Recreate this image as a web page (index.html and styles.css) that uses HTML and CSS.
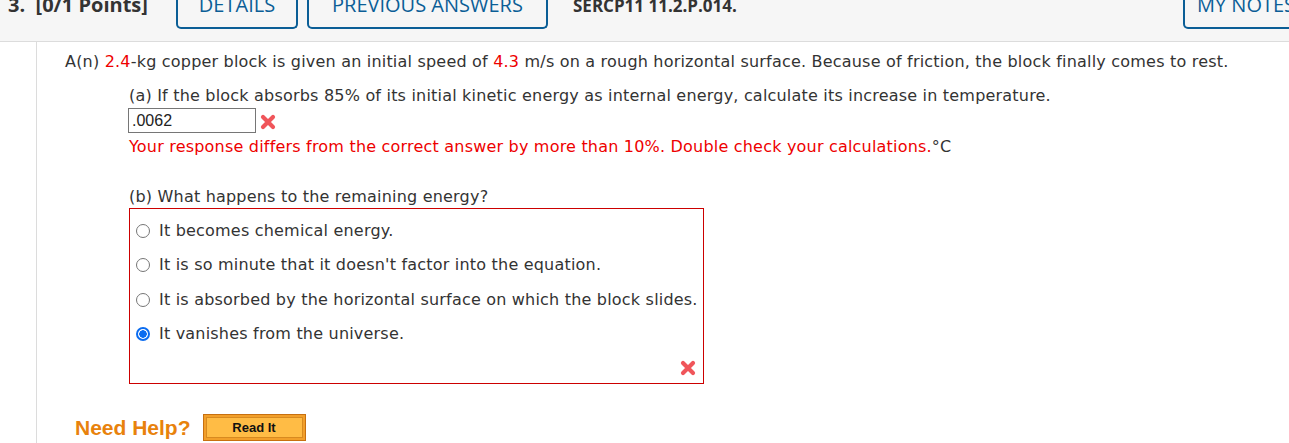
FILE: index.html
```html
<!DOCTYPE html>
<html>
<head>
<meta charset="utf-8">
<link rel="stylesheet" href="styles.css">
</head>
<body>
<div class="header">
  <div class="qnum">3.&nbsp;&nbsp;[0/1 Points]</div>
  <div class="hbtn details">DETAILS</div>
  <div class="hbtn prev">PREVIOUS ANSWERS</div>
  <div class="code">SERCP11 11.2.P.014.</div>
  <div class="spacer"></div>
  <div class="hbtn notes">MY NOTES</div>
</div>
<div class="body">
  <div class="content">
    <p class="stem">A(n) <span class="red">2.4</span>-kg copper block is given an initial speed of <span class="red">4.3</span> m/s on a rough horizontal surface. Because of friction, the block finally comes to rest.</p>
    <div class="part">
      <p class="q">(a) If the block absorbs 85% of its initial kinetic energy as internal energy, calculate its increase in temperature.</p>
      <div class="answer">
        <div class="input">.0062</div>
        <svg class="xmark" width="18" height="18" viewBox="0 0 18 18"><path d="M4 4 L14 14 M14 4 L4 14" stroke="#f0555a" stroke-width="4.2" stroke-linecap="round"/></svg>
      </div>
      <p class="err">Your response differs from the correct answer by more than 10%. Double check your calculations.<span class="unit">°C</span></p>
      <p class="q qb">(b) What happens to the remaining energy?</p>
      <div class="choices">
        <label class="choice"><span class="radio"></span>It becomes chemical energy.</label>
        <label class="choice"><span class="radio"></span>It is so minute that it doesn't factor into the equation.</label>
        <label class="choice"><span class="radio"></span>It is absorbed by the horizontal surface on which the block slides.</label>
        <label class="choice"><span class="radio on"></span>It vanishes from the universe.</label>
        <div class="boxmark"><svg class="xmark" width="18" height="18" viewBox="0 0 18 18"><path d="M4 4 L14 14 M14 4 L4 14" stroke="#f0555a" stroke-width="4.2" stroke-linecap="round"/></svg></div>
      </div>
    </div>
    <div class="help">
      <span class="needhelp">Need Help?</span>
      <span class="readit"><span class="readin">Read It</span></span>
    </div>
  </div>
</div>
</body>
</html>
```
FILE: styles.css
```css
html, body { margin: 0; padding: 0; background: #fff; overflow: hidden; }
body { width: 1289px; height: 443px; }
.header {
  display: flex;
  align-items: flex-start;
  height: 48px;
  margin-top: -6px;
  background: #f6f6f6;
  border-bottom: 1px solid #dcdcdc;
  font-family: "Open Sans", sans-serif;
  box-sizing: border-box;
}
.qnum {
  font-weight: 700;
  font-size: 20px;
  color: #333;
  margin-left: 8px;
  line-height: 24px;
  margin-top: -1px;
  width: 168px;
}
.hbtn {
  box-sizing: border-box;
  height: 35px;
  border: 2px solid #0b5e96;
  border-top: none;
  border-radius: 0 0 5px 5px;
  color: #0b5e96;
  font-size: 20px;
  font-weight: 400;
  line-height: 22px;
  padding-top: 0px;
  text-align: center;
  white-space: nowrap;
}
.details { width: 122px; }
.prev { width: 241px; margin-left: 9px; }
.code {
  font-weight: 700;
  font-size: 17px;
  color: #333;
  line-height: 24px;
  margin-top: 0px;
  margin-left: 25px;
}
.spacer { flex: 1; }
.notes { width: 130px; margin-right: -24px; text-align: left; padding-left: 12px; }
.body {
  display: flex;
  height: 402px;
}
.content {
  margin-left: 36px;
  border-left: 1px solid #dcdcdc;
  padding-left: 28px;
  font-family: "DejaVu Sans", sans-serif;
  font-size: 16px;
  letter-spacing: 0.2px;
  color: #333;
  flex: 1;
}
p { margin: 0; white-space: nowrap; }
.stem { margin-top: 10px; line-height: 20px; }
.red { color: #e00; }
.part { margin-left: 64px; }
.q { margin-top: 14px; line-height: 20px; }
.answer { display: flex; align-items: center; margin-top: 1px; height: 26px; }
.input {
  box-sizing: border-box;
  width: 128px;
  height: 25px;
  border: 1px solid #767676;
  font-family: "Liberation Sans", Arial, sans-serif;
  font-size: 16px;
  letter-spacing: 0;
  color: #222;
  padding-left: 3px;
  line-height: 23px;
  margin-left: -1px;
}
.xmark { display: block; }
.answer .xmark { margin-left: 3px; margin-top: 3px; }
.err { color: #e00; line-height: 20px; margin-top: 4px; }
.unit { color: #333; }
.qb { margin-top: 30px; }
.choices {
  box-sizing: border-box;
  width: 575px;
  height: 176px;
  border: 1px solid #c00;
  margin-top: 1px;
  padding-top: 11px;
  padding-left: 6px;
  display: flex;
  flex-direction: column;
  position: relative;
}
.choice { display: flex; align-items: center; height: 35px; line-height: 20px; margin-top: -7px; margin-bottom: 6.67px; white-space: nowrap; }
.radio {
  box-sizing: border-box;
  width: 14px;
  height: 14px;
  border: 1px solid #767676;
  border-radius: 50%;
  margin-right: 9px;
  flex: none;
}
.radio.on {
  border: 2px solid #0b6cf0;
  background: radial-gradient(circle, #0b6cf0 0 3.5px, #fff 4px);
}
.boxmark { position: absolute; right: 6px; bottom: 6px; }
.help { display: flex; align-items: center; margin-top: 30px; margin-left: 10px; }
.needhelp {
  font-family: "Liberation Sans", Arial, sans-serif;
  font-weight: 700;
  font-size: 21px;
  letter-spacing: 0;
  color: #e8820c;
}
.readit {
  margin-left: 12px;
  box-sizing: border-box;
  width: 103px;
  height: 27px;
  background: #f29f2a;
  border: 1px solid #c77010;
  padding: 2px;
  display: flex;
}
.readin {
  flex: 1;
  background: #ffbc45;
  border: 1px solid #d88a20;
  font-family: "Liberation Sans", Arial, sans-serif;
  font-weight: 700;
  font-size: 13px;
  letter-spacing: 0;
  color: #111;
  text-align: center;
  line-height: 19px;
}
```
